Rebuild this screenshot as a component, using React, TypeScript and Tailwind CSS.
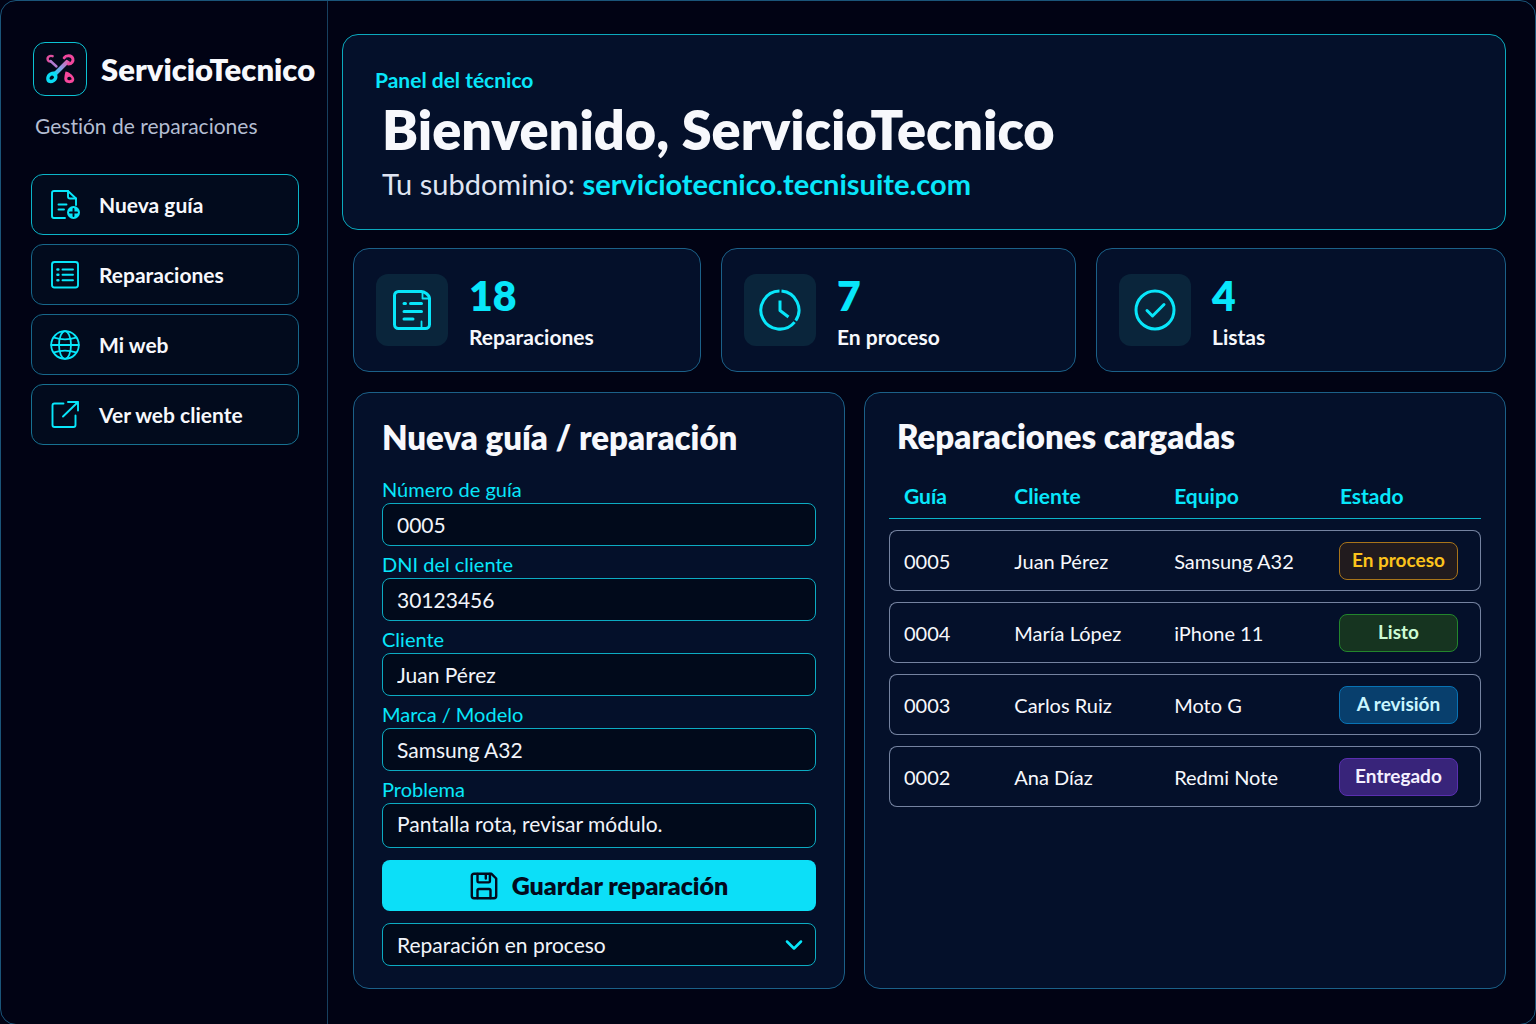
import React from "react";
import { ChevronDown } from "lucide-react";

const stroke = {
  fill: "none",
  stroke: "currentColor",
  strokeLinecap: "round" as const,
  strokeLinejoin: "round" as const,
};

function LogoMark() {
  return (
    <svg viewBox="0 0 32 32" className="size-8" fill="none" strokeLinecap="round" strokeLinejoin="round" aria-hidden="true">
      <defs>
        <linearGradient id="logo-blade" x1="4" y1="28" x2="28" y2="4" gradientUnits="userSpaceOnUse">
          <stop offset="0" stopColor="#08dff5" />
          <stop offset="0.3" stopColor="#22cdf0" />
          <stop offset="0.55" stopColor="#8a9be4" />
          <stop offset="0.8" stopColor="#d765b4" />
          <stop offset="1" stopColor="#f6479c" />
        </linearGradient>
      </defs>
      <path d="M8.600 3.200C5.500 2 2.800 4.400 3.800 7c.5 1.300 1.800 1.800 3.200 1.600" stroke="#e0509f" strokeWidth="2.400" />
      <path d="M6.500 8l6 5.500" stroke="#b07bd0" strokeWidth="2.400" />
      <path d="M10.500 21.500L24 8" stroke="url(#logo-blade)" strokeWidth="4" />
      <path d="M20.200 4.800c2-3 7.400-2.800 8.600.6.900 2.800-1.200 5.600-4.300 5.600" stroke="#f0479d" strokeWidth="3" />
      <path d="M22.500 5.500l3.500 2.200" stroke="#04102a" strokeWidth="1.600" />
      <path
        d="M11.500 18.600c-3.300-.8-6.600.6-8.200 3.200-1.800 3-1.300 6.900 1.200 8 3 1.300 7.200-.5 8.600-3.800.9-2.300.4-4.600-1.600-7.400zM8 22.500c1.700 0 2.500 1 1.900 2.300-.6 1.400-2 2.200-3.300 1.900-1.200-.4-1.300-1.700-.6-2.800.5-.8 1.200-1.300 2-1.400z"
        fill="#0bdcf4"
        fillRule="evenodd"
      />
      <path
        d="M21.500 18.500c3.600.6 7.600 3.500 8.600 6.800.8 3-1.300 4.900-4.600 4.900-3.400 0-5.300-1.800-5.200-4.900.1-2.100.6-4.300 1.200-6.800zM25.200 23.800c1.600.2 2.700 1.400 2.300 2.500-.5 1.200-3.500 1.200-4.100-.1-.5-1.200.4-2.400 1.800-2.400z"
        fill="#f6479c"
        fillRule="evenodd"
      />
    </svg>
  );
}

function NewGuideIcon() {
  return (
    <svg viewBox="0 0 32 32" className="size-8" {...stroke} strokeWidth="1.9" aria-hidden="true">
      <path d="M16 29H5a2 2 0 0 1-2-2V4a2 2 0 0 1 2-2h14l8 7.500V16" />
      <path d="M19 2v5.500a2 2 0 0 0 2 2h6" />
      <path d="M9.500 15.500h8M9.500 20.500h5.500" />
      <circle cx="24.500" cy="23.500" r="6.500" fill="currentColor" stroke="none" />
      <path d="M24.500 20v7M21 23.500h7" stroke="#020d20" />
    </svg>
  );
}

function ListIcon() {
  return (
    <svg viewBox="0 0 32 32" className="size-8" {...stroke} strokeWidth="1.9" aria-hidden="true">
      <rect x="3" y="3" width="26" height="25.500" rx="2.500" />
      <path d="M13.500 10.500h10.500M13.500 15.800h10.500M13.500 21.200h10.500" />
      <path d="M8.500 10.500h.8M8.500 15.800h.8M8.500 21.200h.8" strokeWidth="2.600" />
    </svg>
  );
}

function GlobeIcon() {
  return (
    <svg viewBox="0 0 32 32" className="size-8" {...stroke} strokeWidth="1.800" aria-hidden="true">
      <circle cx="16" cy="16" r="13.800" />
      <ellipse cx="16" cy="16" rx="6" ry="13.800" />
      <path d="M2.200 16h27.600M5 8.600c6.500 2 15.500 2 22 0M5 23.400c6.500-2 15.500-2 22 0" />
    </svg>
  );
}

function ExternalIcon() {
  return (
    <svg viewBox="0 0 32 32" className="size-8" {...stroke} strokeWidth="1.9" aria-hidden="true">
      <path d="M14.500 4.500H5.500a2 2 0 0 0-2 2V26a2 2 0 0 0 2 2h19a2 2 0 0 0 2-2V16.500" />
      <path d="M19 3h10v8.500M29 3L14 17.500" />
    </svg>
  );
}

function NoteIcon() {
  return (
    <svg viewBox="0 0 44 44" className="size-11" {...stroke} strokeWidth="3" aria-hidden="true">
      <path d="M31 3.500H8.500a4 4 0 0 0-4 4v29a4 4 0 0 0 4 4h27a4 4 0 0 0 4-4V11" />
      <path d="M31 3.500c3 0 8.500 3 8.500 7.500" />
      <path d="M32.500 4.500v6h6M31.500 39v-5.500" strokeWidth="1.800" />
      <path d="M14 15.500h1.500M20.500 15.500h11M14 23.500h17.500M14 31h9" />
    </svg>
  );
}

function ClockIcon() {
  return (
    <svg viewBox="0 0 44 44" className="size-11" {...stroke} strokeWidth="3" strokeLinecap="butt" aria-hidden="true">
      <path d="M23.500 3.100A19 19 0 0 1 37.700 32.600" />
      <path d="M36.600 34.100A19 19 0 1 1 21.500 3.100" />
      <path d="M22 12.500V22.500L30.500 29" />
    </svg>
  );
}

function CheckIcon() {
  return (
    <svg viewBox="0 0 44 44" className="size-11" {...stroke} strokeWidth="3" aria-hidden="true">
      <circle cx="22" cy="22" r="19" />
      <path d="M14 22.500l5.500 5.500L31 16.500" />
    </svg>
  );
}

function SaveIcon() {
  return (
    <svg viewBox="0 0 28 28" className="size-7" {...stroke} strokeWidth="2.4" aria-hidden="true">
      <path d="M4 1.800h17.500L26.200 6.500V24a2.200 2.200 0 0 1-2.200 2.200H4A2.200 2.200 0 0 1 1.800 24V4A2.200 2.200 0 0 1 4 1.800z" />
      <path d="M7.500 2v7.200a1.200 1.200 0 0 0 1.200 1.200h10a1.200 1.200 0 0 0 1.200-1.200V2M15.800 3v3.500" />
      <path d="M7.500 26v-7.500a1.500 1.500 0 0 1 1.500-1.500h10a1.500 1.500 0 0 1 1.500 1.500V26" />
    </svg>
  );
}

const nav = [
  { label: "Nueva guía", Icon: NewGuideIcon, border: "border-[#0bb4c8]" },
  { label: "Reparaciones", Icon: ListIcon, border: "border-[#17678a]" },
  { label: "Mi web", Icon: GlobeIcon, border: "border-[#17678a]" },
  { label: "Ver web cliente", Icon: ExternalIcon, border: "border-[#177191]" },
];

const stats = [
  { value: 18, label: "Reparaciones", Icon: NoteIcon },
  { value: 7, label: "En proceso", Icon: ClockIcon },
  { value: 4, label: "Listas", Icon: CheckIcon },
];

const fields = [
  { id: "guia", label: "Número de guía", value: "0005" },
  { id: "dni", label: "DNI del cliente", value: "30123456" },
  { id: "cliente", label: "Cliente", value: "Juan Pérez" },
  { id: "modelo", label: "Marca / Modelo", value: "Samsung A32" },
];

const repairs = [
  { id: "0005", client: "Juan Pérez", device: "Samsung A32", status: "En proceso", tone: "border-[#a8741a] bg-[#211b1e] text-[#fcc31c]" },
  { id: "0004", client: "María López", device: "iPhone 11", status: "Listo", tone: "border-[#23862c] bg-[#163420] text-[#cdfbd3]" },
  { id: "0003", client: "Carlos Ruiz", device: "Moto G", status: "A revisión", tone: "border-[#0873b4] bg-[#083f6d] text-[#c9f5ff]" },
  { id: "0002", client: "Ana Díaz", device: "Redmi Note", status: "Entregado", tone: "border-[#5a2fb0] bg-[#38247a] text-[#f4f0ff]" },
];

const control =
  "block w-full rounded-lg border border-[#0cabc2] bg-[#010a1b] px-3.5 text-[21px] text-[#f1f4fa] outline-none focus:border-[#08e6fa]";
const fieldLabel = "mb-0.5 block text-[20px] leading-6 text-[#08e6fa]";
const panel = "rounded-2xl border border-[#1b6088] bg-[#04102a]";

export default function App() {
  return (
    <div className="bg-[#010314]">
      <div className="flex min-h-screen rounded-2xl border border-[#1a5579] font-['Lato',sans-serif] text-[#f7f8fc] [font-variant-ligatures:none]">
        <aside className="w-[327px] shrink-0 border-r border-[#17405f] pt-[41px] pl-[30px]">
          <div className="flex items-center gap-3.5 pl-0.5">
            <div className="flex size-[54px] shrink-0 items-center justify-center rounded-xl border border-[#0bc3d4] bg-[#020819]">
              <LogoMark />
            </div>
            <span className="text-[31px] leading-10 font-extrabold">ServicioTecnico</span>
          </div>
          <p className="mt-4 pl-1 text-[21px] leading-7 text-[#b4bdd2]">Gestión de reparaciones</p>
          <nav className="mt-[34px] mr-7 flex flex-col gap-[9px]">
            {nav.map(({ label, Icon, border }) => (
              <a
                key={label}
                href="#"
                className={`flex h-[61px] items-center gap-[18px] rounded-xl border bg-[#020b1d] pl-[17px] text-[21px] font-bold ${border}`}
              >
                <span className="text-[#08e6fa]">
                  <Icon />
                </span>
                {label}
              </a>
            ))}
          </nav>
        </aside>

        <main className="flex min-w-0 flex-1 flex-col pt-[33px] pr-[29px] pb-[35px] pl-3.5">
          <header className="h-[196px] rounded-2xl border border-[#0ba9bd] bg-[#04102a] px-8 pt-[31px]">
            <p className="text-[21px] leading-7 font-bold text-[#08e6fa]">Panel del técnico</p>
            <div className="pl-[7px]">
              <h1 className="text-[54px] leading-[72px] font-extrabold">Bienvenido, ServicioTecnico</h1>
              <p className="text-[29px] leading-9 text-[#dfe4f2]">
                Tu subdominio:{" "}
                <a href="#" className="font-bold text-[#08e6fa]">
                  serviciotecnico.tecnisuite.com
                </a>
              </p>
            </div>
          </header>

          <div className="flex flex-1 flex-col pl-[11px]">
            <section className="mt-[18px] grid grid-cols-[348fr_355fr_410fr] gap-5">
              {stats.map(({ value, label, Icon }) => (
                <div key={label} className={`flex h-[124px] items-center gap-[21px] px-[22px] pt-[3px] ${panel}`}>
                  <div className="mb-[3px] flex size-[72px] shrink-0 items-center justify-center rounded-xl bg-[#0a253b] text-[#08e6fa]">
                    <Icon />
                  </div>
                  <div>
                    <div className="text-[41px] leading-[50px] font-extrabold text-[#08e6fa]">{value}</div>
                    <div className="text-[21px] leading-8 font-bold">{label}</div>
                  </div>
                </div>
              ))}
            </section>

            <div className="mt-5 grid flex-1 grid-cols-[492fr_642fr] gap-[19px]">
              <form className={`px-7 pt-6 pb-[22px] ${panel}`} onSubmit={(e) => e.preventDefault()}>
                <h2 className="text-[33px] leading-10 font-extrabold">Nueva guía / reparación</h2>
                <div className="mt-5 flex flex-col gap-1.5">
                  {fields.map(({ id, label, value }) => (
                    <div key={id}>
                      <label htmlFor={id} className={fieldLabel}>
                        {label}
                      </label>
                      <input id={id} defaultValue={value} className={`h-[43px] ${control}`} />
                    </div>
                  ))}
                  <div>
                    <label htmlFor="problema" className={fieldLabel}>
                      Problema
                    </label>
                    <textarea
                      id="problema"
                      rows={1}
                      defaultValue="Pantalla rota, revisar módulo."
                      className={`h-[45px] resize-none overflow-hidden py-1 leading-8 ${control}`}
                    />
                  </div>
                </div>
                <button
                  type="submit"
                  className="mt-3 flex h-[51px] w-full items-center justify-center gap-3.5 rounded-lg bg-[#0cdff8] text-[25px] font-extrabold text-[#020b1d]"
                >
                  <SaveIcon />
                  Guardar reparación
                </button>
                <div className="relative mt-3">
                  <select aria-label="Estado de la reparación" className={`h-[43px] appearance-none ${control}`}>
                    <option>Reparación en proceso</option>
                    <option>Reparación lista</option>
                    <option>Equipo entregado</option>
                  </select>
                  <ChevronDown className="pointer-events-none absolute top-2 right-2 size-7 text-[#08e6fa]" strokeWidth={2.2} />
                </div>
              </form>

              <section className={`px-6 pt-[23px] ${panel}`}>
                <h2 className="pl-2 text-[33px] leading-10 font-extrabold">Reparaciones cargadas</h2>
                <table className="mt-[9px] w-full table-fixed border-separate border-spacing-x-0 border-spacing-y-[11px] text-left text-[20px]">
                  <thead>
                    <tr className="h-[43px] text-[21px] text-[#08e6fa] [&>th]:border-b [&>th]:border-[#0bb4c8] [&>th]:pb-0.5 [&>th]:font-bold">
                      <th className="w-[21%] pl-[15px]">Guía</th>
                      <th className="w-[27%] pl-px">Cliente</th>
                      <th className="w-[28%] pl-px">Equipo</th>
                      <th className="w-[24%] pl-px">Estado</th>
                    </tr>
                  </thead>
                  <tbody>
                    {repairs.map((r) => (
                      <tr key={r.id} className="h-[61px] [&>td]:border-y [&>td]:border-[#7583a0]">
                        <td className="rounded-l-lg border-l pl-3.5">{r.id}</td>
                        <td className="pl-px">{r.client}</td>
                        <td className="pl-px">{r.device}</td>
                        <td className="rounded-r-lg border-r pr-[22px]">
                          <span className={`flex h-[38px] items-center justify-center rounded-lg border text-[19px] font-bold ${r.tone}`}>
                            {r.status}
                          </span>
                        </td>
                      </tr>
                    ))}
                  </tbody>
                </table>
              </section>
            </div>
          </div>
        </main>
      </div>
    </div>
  );
}
